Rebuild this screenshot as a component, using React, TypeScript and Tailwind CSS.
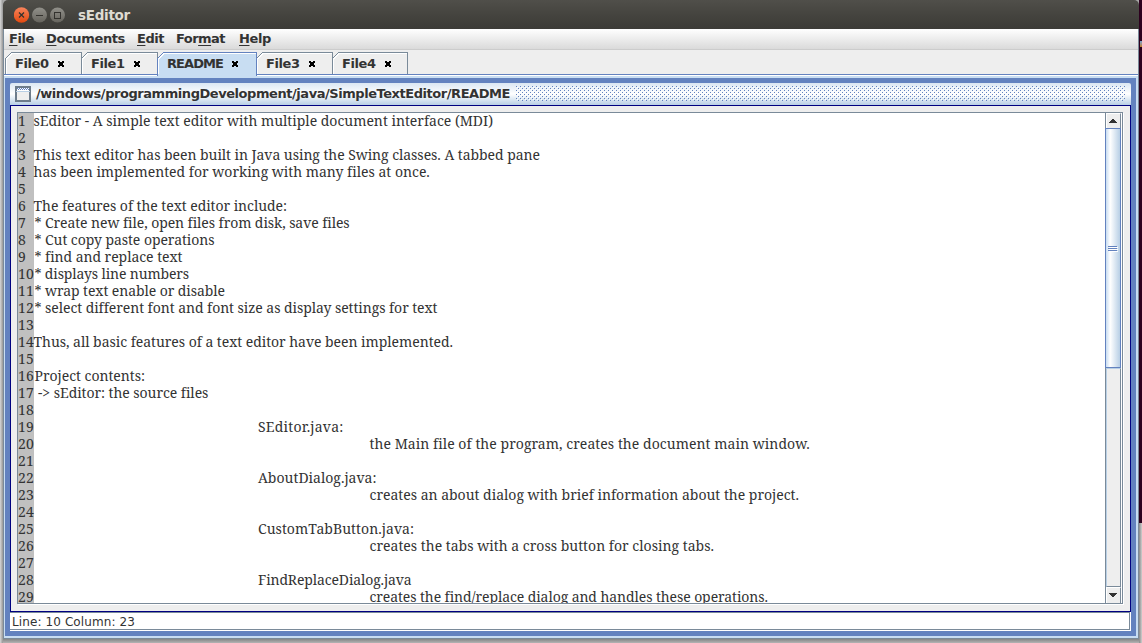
import { useLayoutEffect, useRef, useState } from "react";

function Fit({ text, width, className = "" }: { text: string; width: number; className?: string }) {
  const ref = useRef<HTMLSpanElement>(null);
  const [spacing, setSpacing] = useState(0);
  useLayoutEffect(() => {
    if (ref.current) setSpacing((width - ref.current.getBoundingClientRect().width) / text.length);
  }, [text, width]);
  return (
    <span ref={ref} className={`inline-block whitespace-pre ${className}`} style={{ letterSpacing: spacing }}>
      {text}
    </span>
  );
}

const lines: [string, number, number][] = [
  ["sEditor - A simple text editor with multiple document interface (MDI)", 459.5, 0],
  ["", 0, 0],
  ["This text editor has been built in Java using the Swing classes. A tabbed pane", 506.5, 0],
  ["has been implemented for working with many files at once.", 396, 0],
  ["", 0, 0],
  ["The features of the text editor include:", 253.5, 0],
  ["* Create new file, open files from disk, save files", 314, 1],
  ["* Cut copy paste operations", 180, 1],
  ["* find and replace text", 147.5, 1],
  ["* displays line numbers", 154.5, 1],
  ["* wrap text enable or disable", 190.5, 1],
  ["* select different font and font size as display settings for text", 402.5, 1],
  ["", 0, 0],
  ["Thus, all basic features of a text editor have been implemented.", 419.5, 0],
  ["", 0, 0],
  ["Project contents:", 110.5, 1],
  [" -> sEditor: the source files", 173.5, 1],
  ["", 0, 0],
  ["SEditor.java:", 85.5, 2],
  ["the Main file of the program, creates the document main window.", 440, 3],
  ["", 0, 0],
  ["AboutDialog.java:", 118.5, 2],
  ["creates an about dialog with brief information about the project.", 429.5, 3],
  ["", 0, 0],
  ["CustomTabButton.java:", 156, 2],
  ["creates the tabs with a cross button for closing tabs.", 344.5, 3],
  ["", 0, 0],
  ["FindReplaceDialog.java", 153.5, 2],
  ["creates the find/replace dialog and handles these operations.", 398, 3],
];

const indents = ["-ml-[0.5px]", "pl-[0.5px]", "pl-[224px]", "pl-[335.5px]"];

const menus: [string, string, string, number, string][] = [
  ["", "F", "ile", 25, "w-[37px]"],
  ["", "D", "ocuments", 79, "w-[91px]"],
  ["", "E", "dit", 27, "w-[39px]"],
  ["For", "m", "at", 49, "w-[63px]"],
  ["", "H", "elp", 32, "w-[40px]"],
];

const tabs: [string, number, boolean][] = [
  ["File0", 76, false],
  ["File1", 76, false],
  ["README", 99, true],
  ["File3", 76, false],
  ["File4", 75, false],
];

function Tab({ name, width, active }: { name: string; width: number; active: boolean }) {
  return (
    <div className="relative h-[22px] shrink-0" style={{ width }}>
      <svg
        className={active ? "absolute left-0 top-0 z-10" : "absolute left-0 top-0"}
        width={width + 1}
        height={active ? 24 : 22}
        shapeRendering="crispEdges"
      >
        <path
          d={`M0.5 25V6.5L6.5 0.5H${width + 0.5}V25`}
          fill={active ? "#c8ddf2" : "#eeeeee"}
          stroke={active ? "#6382bf" : "#7a8a99"}
        />
        <path d={`M1.5 22V7L7 1.5H${width}`} fill="none" stroke="#fff" />
      </svg>
      <div className="relative z-20 flex h-[22px] items-center pl-[10px] pt-px">
        <Fit text={name} width={active ? 56 : 33.5} />
        <svg className="ml-[9px] -translate-x-[0.5px]" width="7" height="6" viewBox="0 0 7 6" shapeRendering="crispEdges">
          <path d="M0 0h2v1h-2zM4 0h2v1h-2zM0 1h6v1h-6zM1 2h4v2h-4zM0 4h6v1h-6zM0 5h2v1h-2zM4 5h2v1h-2z" fill="#000" />
        </svg>
      </div>
    </div>
  );
}

function Arrow({ down = false }: { down?: boolean }) {
  return (
    <div
      className={`flex w-[15px] shrink-0 justify-center border-l border-t border-r border-l-white border-t-white border-r-[#7a8a99] bg-[#eeeeee] ${down ? "h-[16px] pt-[5px]" : "h-[15px] pt-[5px]"}`}
    >
      <svg width="9" height="4" viewBox="0 0 9 4" className="shrink-0" shapeRendering="crispEdges">
        <path d={down ? "M0 0h8v1h-1v1h-1v1h-1v1h-2v-1h-1v-1h-1v-1h-1z" : "M3 0h2v1h1v1h1v1h1v1h-8v-1h1v-1h1v-1h1z"} fill="#333" />
      </svg>
    </div>
  );
}

export default function App() {
  return (
    <div className="flex h-[643px] w-[1142px] overflow-hidden bg-[#a9a9a9] font-['DejaVu_Sans',sans-serif] text-[13px] text-[#333333]">
      <div className="w-[3px] shrink-0 bg-gradient-to-r from-[#d8d8d8] to-[#969696]" />
      <div className="flex w-[1136px] shrink-0 flex-col">
        <header className="flex h-[29px] shrink-0 items-center rounded-t-[5px] bg-gradient-to-b from-[#504f4a] via-[#45443f] to-[#3c3b37] pl-[11px]">
          <svg width="52" height="16" viewBox="0 0 52 16">
            <defs>
              <linearGradient id="close" x1="0" y1="0" x2="0" y2="1">
                <stop offset="0" stopColor="#f8845c" />
                <stop offset="1" stopColor="#e3490f" />
              </linearGradient>
              <linearGradient id="plain" x1="0" y1="0" x2="0" y2="1">
                <stop offset="0" stopColor="#91908a" />
                <stop offset="1" stopColor="#66645d" />
              </linearGradient>
            </defs>
            <circle cx="7.5" cy="8" r="7.7" fill="url(#close)" />
            <circle cx="25.5" cy="8" r="7.5" fill="url(#plain)" />
            <circle cx="43.5" cy="8" r="7.5" fill="url(#plain)" />
            <path d="M5 5.5l5 5m0-5l-5 5" stroke="#33322e" strokeWidth="1.2" />
            <path d="M22 8.5h7" stroke="#33322e" />
            <rect x="40.5" y="5.5" width="6" height="6" fill="none" stroke="#33322e" />
          </svg>
          <span className="ml-[12px] pt-[2px] text-[13.5px] font-bold text-[#dfdbd2]">
            <Fit text="sEditor" width={52} />
          </span>
        </header>
        <div className="flex h-[610px] shrink-0 flex-col border-b border-l border-r border-[#7a8a99] bg-[#eeeeee]">
          <nav className="flex h-[21px] shrink-0 items-start border-b border-[#cccccc] bg-gradient-to-b from-white to-[#dadada] pl-[5px] font-bold">
            {menus.map(([a, b, c, w, cls]) => (
              <div key={b} className={`${cls} leading-[19px]`}>
                <MenuLabel a={a} b={b} c={c} width={w} />
              </div>
            ))}
          </nav>
          <div className="flex h-[25px] shrink-0 border-b border-[#6382bf] pl-px pt-[2px] font-bold">
            {tabs.map(([name, w, active]) => (
              <Tab key={name} name={name} width={w} active={active} />
            ))}
          </div>
          <div className="h-px shrink-0 bg-white" />
          <div className="flex h-[562px] shrink-0 flex-col border-b-2 border-l border-r-2 border-t-2 border-[#c8ddf2]">
            <div className="flex h-[558px] shrink-0 flex-col border-5 border-[#6382bf] bg-[#6382bf]">
              <div className="flex h-[22px] shrink-0 items-center rounded-tr-[2px] rounded-tl-[2px] bg-gradient-to-b from-[#dbe7f3] via-white to-[#b8cfe5] pl-[5px] pr-[6px] font-bold">
                <svg width="16" height="16" viewBox="0 0 16 16" shapeRendering="crispEdges">
                  <rect x="1" y="1" width="14" height="14" fill="#eee" stroke="#6d7c8b" strokeWidth="1.4" />
                  <path d="M2 2h12v4H2z" fill="#fff" />
                  <path d="M2 2.5h12M3 3.5h11" stroke="#6382bf" strokeDasharray="1 1" />
                  <path d="M1 5.5h14" stroke="#b8cfe5" />
                </svg>
                <div className="ml-[5px] w-[480px] leading-[18px]">
                  <Fit text="/windows/programmingDevelopment/java/SimpleTextEditor/README" width={474} />
                </div>
                <svg className="flex-1" height="16" shapeRendering="crispEdges">
                  <defs>
                    <pattern id="bumps" width="4" height="4" patternUnits="userSpaceOnUse">
                      <path d="M0 0h1v1h-1zM2 2h1v1h-1z" fill="#6382bf" />
                      <path d="M1 1h1v1h-1zM3 3h1v1h-1z" fill="#fff" />
                    </pattern>
                  </defs>
                  <rect width="100%" height="15" fill="url(#bumps)" />
                </svg>
              </div>
              <div className="h-[507px] shrink-0 border border-[#000080] bg-[#eeeeee] pl-[6px] pr-[7px] pt-[6px]">
                <div className="flex h-[492px] border border-[#7a8a99] bg-white shadow-[1px_1px_0_white]">
                  <div className="flex min-w-0 flex-1 flex-col overflow-hidden font-['Droid_Serif','Noto_Serif','DejaVu_Serif',serif] text-[14px] leading-[17px]">
                    {lines.map(([text, width, indent], i) => (
                      <div key={i} className={i === 0 ? "flex h-[16px] shrink-0 leading-[15px]" : "flex h-[17px] shrink-0"}>
                        <div className="w-[16px] shrink-0 bg-[#c0c0c0]">
                          <Fit text={String(i + 1)} width={i < 9 ? 8 : 16} />
                        </div>
                        <div className={indents[indent]}>{text && <Fit text={text} width={width} />}</div>
                      </div>
                    ))}
                  </div>
                  <div className="flex w-[16px] shrink-0 flex-col border-l border-[#7a8a99] bg-[#eeeeee]">
                    <Arrow />
                    <div className="-ml-px flex h-[240px] w-[16px] shrink-0 items-start justify-center border border-[#6382bf] bg-gradient-to-r from-[#c8ddf2] via-white via-30% to-[#b8cfe5] pt-[117px]">
                      <svg width="10" height="6" className="shrink-0" shapeRendering="crispEdges">
                        <path d="M0 0h9v1h-9zM0 2h9v1h-9zM0 4h9v1h-9z" fill="#6382bf" />
                        <path d="M1 1h9v1h-9zM1 3h9v1h-9zM1 5h9v1h-9z" fill="#fff" />
                      </svg>
                    </div>
                    <div className="flex-1 border-b border-l border-r border-t border-[#7a8a99] border-l-[#b8cfe5] border-t-[#b8cfe5]" />
                    <Arrow down />
                  </div>
                  <div className="w-px shrink-0 bg-white" />
                </div>
              </div>
              <div className="h-[19px] shrink-0 border-b border-r border-white bg-white">
                <div className="flex h-[18px] items-center border-b border-r border-t border-[#7a8a99] pl-[2px] pt-[2px] text-[12px]">
                  <Fit text="Line: 10 Column: 23" width={123} />
                </div>
              </div>
            </div>
          </div>
        </div>
        <div className="h-[4px] bg-gradient-to-b from-[#858585] to-[#b4b4b4]" />
      </div>
      <div className="flex w-[3px] shrink-0 flex-col bg-[#2c001e]">
        <div className="mt-[41px] ml-px h-[6px] bg-gradient-to-b from-[#729fcf] to-[#c17d11]" />
        <div className="mt-auto h-[120px] bg-gradient-to-r from-[#8a8a8a] to-[#cfcfcf]" />
      </div>
    </div>
  );
}

function MenuLabel({ a, b, c, width }: { a: string; b: string; c: string; width: number }) {
  const ref = useRef<HTMLSpanElement>(null);
  const [spacing, setSpacing] = useState(0);
  useLayoutEffect(() => {
    if (ref.current) setSpacing((width - ref.current.getBoundingClientRect().width) / (a + b + c).length);
  }, [a, b, c, width]);
  return (
    <span ref={ref} className="inline-block" style={{ letterSpacing: spacing }}>
      {a}
      <span className="underline underline-offset-2">{b}</span>
      {c}
    </span>
  );
}
